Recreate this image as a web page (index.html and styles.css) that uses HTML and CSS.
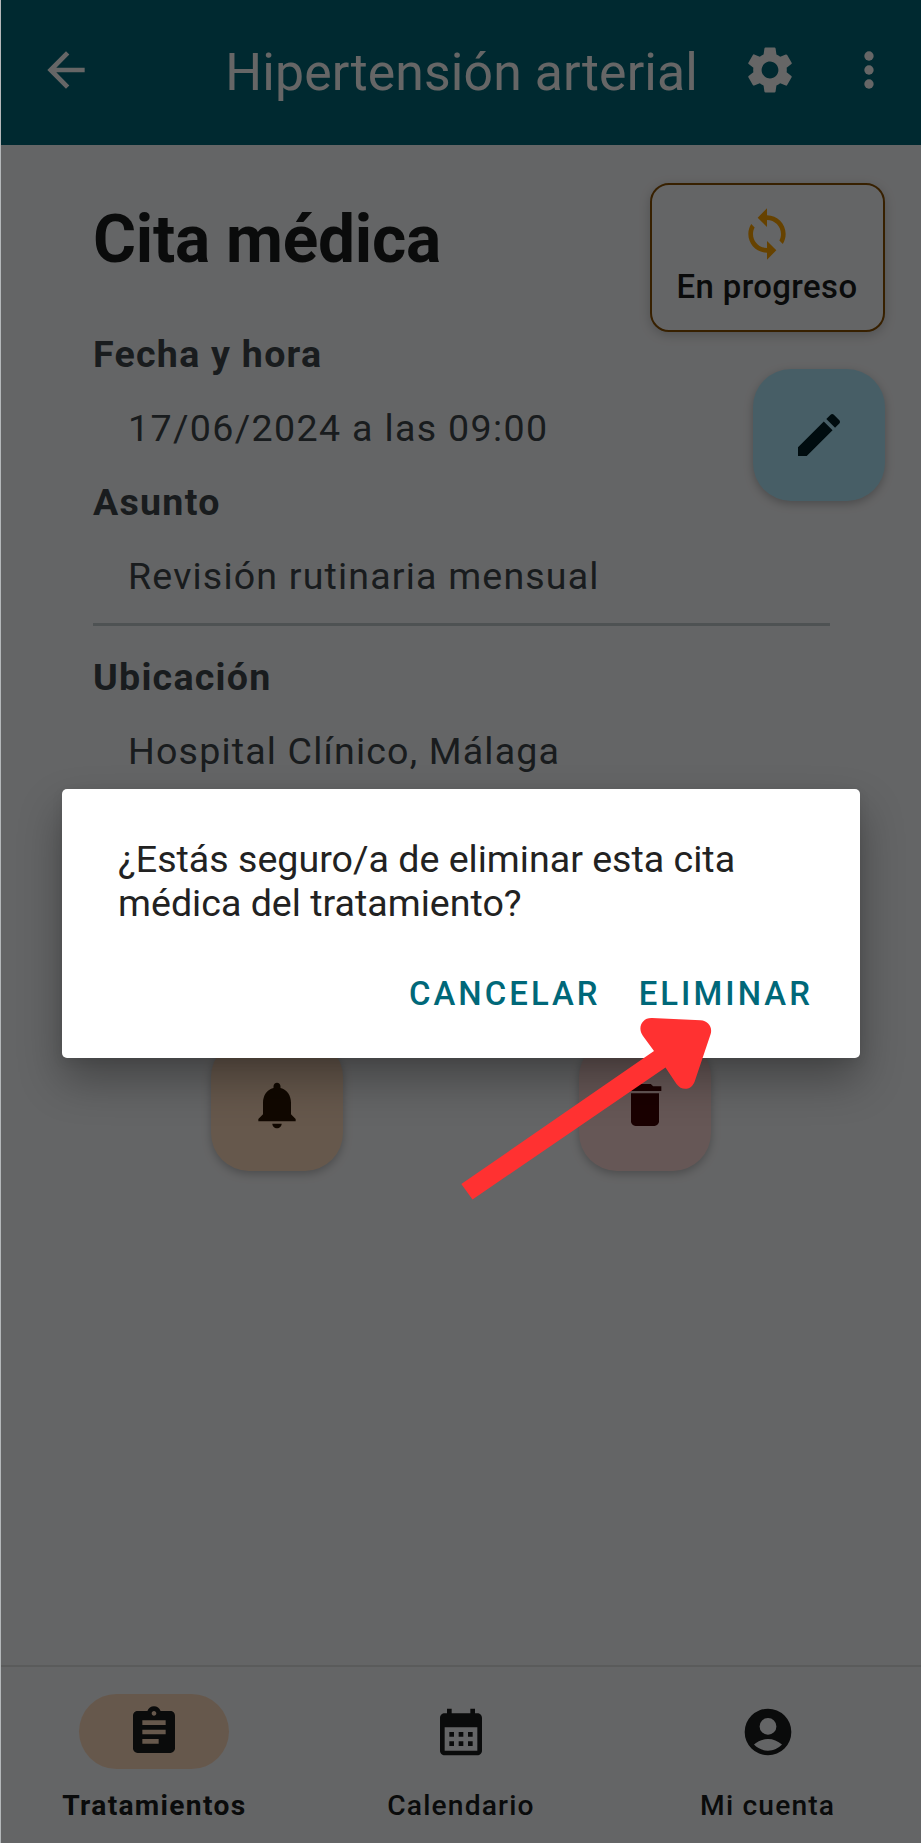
FILE: index.html
```html
<!DOCTYPE html>
<html lang="es">
<head>
<meta charset="utf-8">
<title>Hipertensión arterial</title>
<link rel="stylesheet" href="styles.css">
</head>
<body>
<div class="screen">
  <header class="app-bar">
    <svg class="icon" viewBox="0 0 24 24"><path d="M20 11H7.83l5.59-5.59L12 4l-8 8 8 8 1.41-1.41L7.83 13H20z"/></svg>
    <h1 class="app-title">Hipertensión arterial</h1>
    <svg class="icon" viewBox="0 0 24 24"><path d="M19.14 12.94c.04-.3.06-.61.06-.94 0-.32-.02-.64-.07-.94l2.03-1.58c.18-.14.23-.41.12-.61l-1.92-3.32c-.12-.22-.37-.29-.59-.22l-2.39.96c-.5-.38-1.03-.7-1.62-.94L14.4 2.81c-.04-.24-.24-.41-.48-.41h-3.84c-.24 0-.43.17-.47.41l-.36 2.54c-.59.24-1.13.57-1.62.94l-2.39-.96c-.22-.08-.47 0-.59.22L2.74 8.87c-.12.21-.08.47.12.61l2.03 1.58c-.05.3-.09.63-.09.94s.02.64.07.94l-2.03 1.58c-.18.14-.23.41-.12.61l1.92 3.32c.12.22.37.29.59.22l2.39-.96c.5.38 1.03.7 1.62.94l.36 2.54c.05.24.24.41.48.41h3.84c.24 0 .44-.17.47-.41l.36-2.54c.59-.24 1.13-.56 1.62-.94l2.39.96c.22.08.47 0 .59-.22l1.92-3.32c.12-.22.07-.47-.12-.61zM12 15.6c-1.98 0-3.6-1.62-3.6-3.6s1.62-3.6 3.6-3.6 3.6 1.62 3.6 3.6-1.62 3.6-3.6 3.6z"/></svg>
    <svg class="icon more" viewBox="0 0 24 24"><circle cx="12" cy="6" r="2"/><circle cx="12" cy="12" r="2"/><circle cx="12" cy="18" r="2"/></svg>
  </header>

  <main class="content">
    <div class="overview">
      <section class="details">
        <h2 class="heading">Cita médica</h2>
        <p class="label">Fecha y hora</p>
        <p class="value date">17/06/2024 a las 09:00</p>
        <p class="label">Asunto</p>
        <p class="value">Revisión rutinaria mensual</p>
      </section>
      <aside class="side">
        <div class="status">
          <svg class="icon sync" viewBox="0 0 24 24"><path d="M12 4V1L8 5l4 4V6c3.31 0 6 2.69 6 6 0 1.01-.25 1.97-.7 2.8l1.46 1.46C19.54 15.03 20 13.57 20 12c0-4.42-3.58-8-8-8zm0 14c-3.31 0-6-2.69-6-6 0-1.01.25-1.97.7-2.8L5.24 7.74C4.46 8.97 4 10.43 4 12c0 4.42 3.58 8 8 8v3l4-4-4-4v3z"/></svg>
          <span class="status-text">En progreso</span>
        </div>
        <button class="fab edit"><svg class="icon" viewBox="0 0 24 24"><path d="M3 17.25V21h3.75L17.81 9.94l-3.75-3.75L3 17.25zM20.71 7.04c.39-.39.39-1.02 0-1.41l-2.34-2.34c-.39-.39-1.02-.39-1.41 0l-1.83 1.83 3.75 3.75 1.83-1.83z"/></svg></button>
      </aside>
    </div>
    <hr class="divider">
    <section class="details">
      <p class="label">Ubicación</p>
      <p class="value">Hospital Clínico, Málaga</p>
    </section>
    <div class="actions">
      <button class="fab remind"><svg class="icon" viewBox="0 0 24 24"><path d="M12 22c1.1 0 2-.9 2-2h-4c0 1.1.89 2 2 2zM18 16v-5c0-3.07-1.64-5.64-4.5-6.32V4c0-.83-.67-1.5-1.5-1.5s-1.5.67-1.5 1.5v.68C7.63 5.36 6 7.92 6 11v5l-2 2v1h16v-1l-2-2z"/></svg></button>
      <button class="fab delete"><svg class="icon" viewBox="0 0 24 24"><path d="M6 19c0 1.1.9 2 2 2h8c1.1 0 2-.9 2-2V7H6v12zM19 4h-3.5l-1-1h-5l-1 1H5v2h14V4z"/></svg></button>
    </div>
  </main>

  <nav class="nav">
    <a class="tab active"><span class="pill"><svg class="icon" viewBox="0 0 24 24"><path d="M19 3h-4.18C14.4 1.84 13.3 1 12 1s-2.4.84-2.82 2H5c-1.1 0-2 .9-2 2v14c0 1.1.9 2 2 2h14c1.1 0 2-.9 2-2V5c0-1.1-.9-2-2-2zm-7 0c.55 0 1 .45 1 1s-.45 1-1 1-1-.45-1-1 .45-1 1-1zm2 14H7v-2h7v2zm3-4H7v-2h10v2zm0-4H7V7h10v2z"/></svg></span><span class="tab-text">Tratamientos</span></a>
    <a class="tab"><span class="pill"><svg class="icon" viewBox="0 0 24 24"><path d="M19 4h-1V2h-2v2H8V2H6v2H5c-1.11 0-1.99.9-1.99 2L3 20c0 1.1.89 2 2 2h14c1.1 0 2-.9 2-2V6c0-1.1-.9-2-2-2zm0 16H5V10h14v10zM9 14H7v-2h2v2zm4 0h-2v-2h2v2zm4 0h-2v-2h2v2zm-8 4H7v-2h2v2zm4 0h-2v-2h2v2zm4 0h-2v-2h2v2z"/></svg></span><span class="tab-text">Calendario</span></a>
    <a class="tab"><span class="pill"><svg class="icon" viewBox="0 0 24 24"><path fill-rule="evenodd" d="M12 2a10 10 0 1 0 0 20 10 10 0 0 0 0-20zm0 4a3.6 3.6 0 1 1 0 7.2A3.6 3.6 0 0 1 12 6zm0 14c-2.3 0-4.5-1-6-2.6C7.8 15.8 9.8 15 12 15s4.2.8 6 2.400C16.500 19 14.300 20 12 20z"/></svg></span><span class="tab-text">Mi cuenta</span></a>
  </nav>

  <div class="scrim">
    <div class="dialog">
      <p class="message">¿Estás seguro/a de eliminar esta cita médica del tratamiento?</p>
      <div class="dialog-actions">
        <button class="text-button">CANCELAR</button>
        <button class="text-button">ELIMINAR</button>
      </div>
    </div>
  </div>

  <svg class="pointer" viewBox="0 0 254 184"><path d="M3.300 168 196 35 185 20C179 12 184 1.500 194 2L242.500 4.300C250 4.800 255 11 252.500 18.500L236.500 66C233 74.500 223.500 75 218.500 68L207.500 51.500 14.500 183.500z"/></svg>
</div>
</body>
</html>
```

FILE: styles.css
```css
* {
  box-sizing: border-box;
  margin: 0;
  padding: 0;
}

body {
  background: #b4b8ba;
  font-family: Roboto, "Liberation Sans", sans-serif;
}

.screen {
  position: relative;
  display: flex;
  flex-direction: column;
  height: 1843px;
  margin-left: 1px;
  overflow: hidden;
  background: #fbfcfe;
  color: #191c1d;
}

.icon {
  flex: none;
  display: block;
  width: 56px;
  height: 56px;
  fill: currentColor;
}

.app-bar {
  display: flex;
  align-items: center;
  height: 145px;
  padding: 0 24px 5px 37px;
  background: #006879;
  color: #fff;
}

.app-title {
  flex: 1;
  padding: 5px 44px 0 0;
  font-size: 51.700px;
  font-weight: 400;
  line-height: 66px;
  letter-spacing: .15px;
  text-align: right;
  white-space: nowrap;
}

.more {
  margin-left: 43px;
}

.content {
  flex: 1;
}

.overview {
  display: flex;
  justify-content: space-between;
  height: 478px;
  padding: 38px 36.500px 0 0;
}

.details {
  padding-left: 92px;
}

.heading {
  height: 112px;
  margin-bottom: 36.500px;
  padding-top: 1px;
  font-size: 65.800px;
  font-weight: 700;
  line-height: 112px;
  letter-spacing: -.25px;
}

.label,
.value {
  margin-bottom: 30.300px;
  color: #40484b;
  font-size: 37.600px;
  line-height: 44px;
  letter-spacing: 1.170px;
  white-space: nowrap;
}

.label {
  font-weight: 700;
  letter-spacing: 1.250px;
}

.value {
  padding-left: 35px;
}

.date {
  letter-spacing: 1.340px;
}

.side {
  display: flex;
  flex-direction: column;
  align-items: flex-end;
  gap: 37px;
}

.status {
  display: flex;
  flex-direction: column;
  align-items: center;
  width: 235px;
  height: 149px;
  padding-top: 21px;
  border: 2.400px solid #8b5000;
  border-radius: 19px;
  background: #fbfcfe;
  box-shadow: 0 3px 12px rgba(0, 0, 0, .2);
}

.sync {
  color: #ffa500;
}

.status-text {
  margin-top: 1px;
  font-size: 32.900px;
  font-weight: 500;
  line-height: 48px;
  letter-spacing: .4px;
}

.fab {
  display: grid;
  place-items: center;
  width: 132px;
  height: 132px;
  border: 0;
  border-radius: 38px;
  box-shadow: 0 3px 10px rgba(0, 0, 0, .25);
}

.edit {
  background: #b2ebff;
  color: #001f26;
}

.remind {
  background: #ffdcbe;
  color: #2c1600;
}

.delete {
  background: #ffdad6;
  color: #410002;
}

.divider {
  height: 3px;
  margin: 0 91px 0 92px;
  border: 0;
  background: #c4cccf;
}

.divider + .details {
  padding-top: 29px;
}

.actions {
  display: flex;
  justify-content: space-around;
  padding: 235px 92px 0;
}

.nav {
  display: flex;
  height: 178px;
  border-top: 2px solid #e1e3e4;
}

.tab {
  flex: 1;
  display: flex;
  flex-direction: column;
  align-items: center;
  padding-top: 27px;
}

.pill {
  display: grid;
  place-items: center;
  width: 150px;
  height: 75px;
  border-radius: 38px;
}

.active .pill {
  background: #ffdcbe;
}

.tab-text {
  margin-top: 20px;
  font-size: 28.200px;
  font-weight: 500;
  line-height: 34px;
  letter-spacing: 1.170px;
}

.active .tab-text {
  font-weight: 700;
  letter-spacing: 1.300px;
}

.scrim {
  position: absolute;
  inset: 0;
  display: flex;
  flex-direction: column;
  align-items: center;
  padding-top: 789px;
  background: rgba(0, 0, 0, .6);
}

.dialog {
  width: 798px;
  height: 269px;
  padding: 48px 47px 0 56px;
  border-radius: 5px;
  background: #fff;
  color: #222;
  box-shadow: 0 22px 44px rgba(0, 0, 0, .32), 0 4px 12px rgba(0, 0, 0, .08);
}

.message {
  font-size: 37.600px;
  line-height: 44px;
}

.dialog-actions {
  display: flex;
  justify-content: flex-end;
  gap: 38px;
  margin-top: 50px;
}

.text-button {
  border: 0;
  background: none;
  color: #006879;
  font: 500 32.900px/38px Roboto, "Liberation Sans", sans-serif;
  letter-spacing: 3.060px;
}

.pointer {
  position: absolute;
  left: 457px;
  top: 1016px;
  width: 254px;
  height: 184px;
  fill: #ff3131;
}
```
